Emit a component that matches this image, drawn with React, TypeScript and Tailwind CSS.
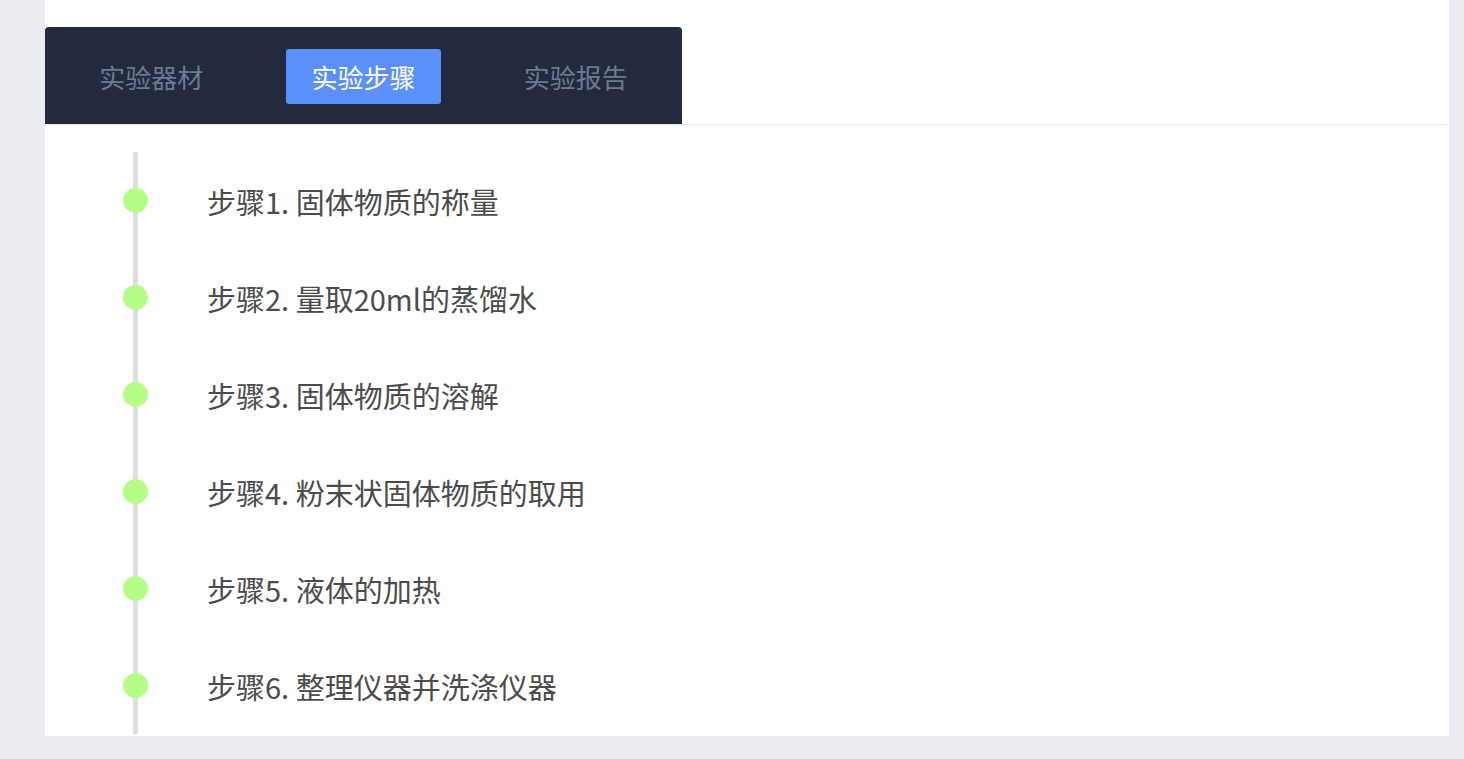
const tabs = ["实验器材", "实验步骤", "实验报告"];
const active = 1;

const steps = [
  "步骤1. 固体物质的称量",
  "步骤2. 量取20ml的蒸馏水",
  "步骤3. 固体物质的溶解",
  "步骤4. 粉末状固体物质的取用",
  "步骤5. 液体的加热",
  "步骤6. 整理仪器并洗涤仪器",
];

export default function App() {
  return (
    <div
      className="h-[759px] bg-[#ebecf1] pl-[45px] pr-[15px]"
      style={{ fontFamily: '"Microsoft YaHei", "Noto Sans CJK SC", sans-serif' }}
    >
      <div className="h-[736px] bg-white overflow-hidden pt-[27px]">
        {/* tab bar */}
        <div className="border-b border-[#e6e6e6]">
          <div className="w-[637px] h-[97px] bg-[#232a3e] rounded-t-[4px] grid grid-cols-3 items-center">
            {tabs.map((t, i) => (
              <div key={t} className="flex justify-center">
                <div
                  className={
                    i === active
                      ? "w-[155px] h-[55px] mt-[2px] rounded-[3px] bg-[#5b8ff9] text-white text-[26px] flex items-center justify-center"
                      : "text-[#6b7b93] text-[26px] mt-[2px]"
                  }
                >
                  {t}
                </div>
              </div>
            ))}
          </div>
        </div>

        {/* steps timeline */}
        <div className="ml-[88px] mt-[27px] border-l-[5px] border-[#dedede]">
          {steps.map((s) => (
            <div key={s} className="h-[97px] flex items-center">
              <span className="ml-[-15px] w-[25px] h-[25px] rounded-full bg-[#b4fd87] shrink-0" />
              <span className="ml-[59px] text-[29px] text-[#4b4b4b] leading-none mt-[2px]">{s}</span>
            </div>
          ))}
        </div>
      </div>
    </div>
  );
}
